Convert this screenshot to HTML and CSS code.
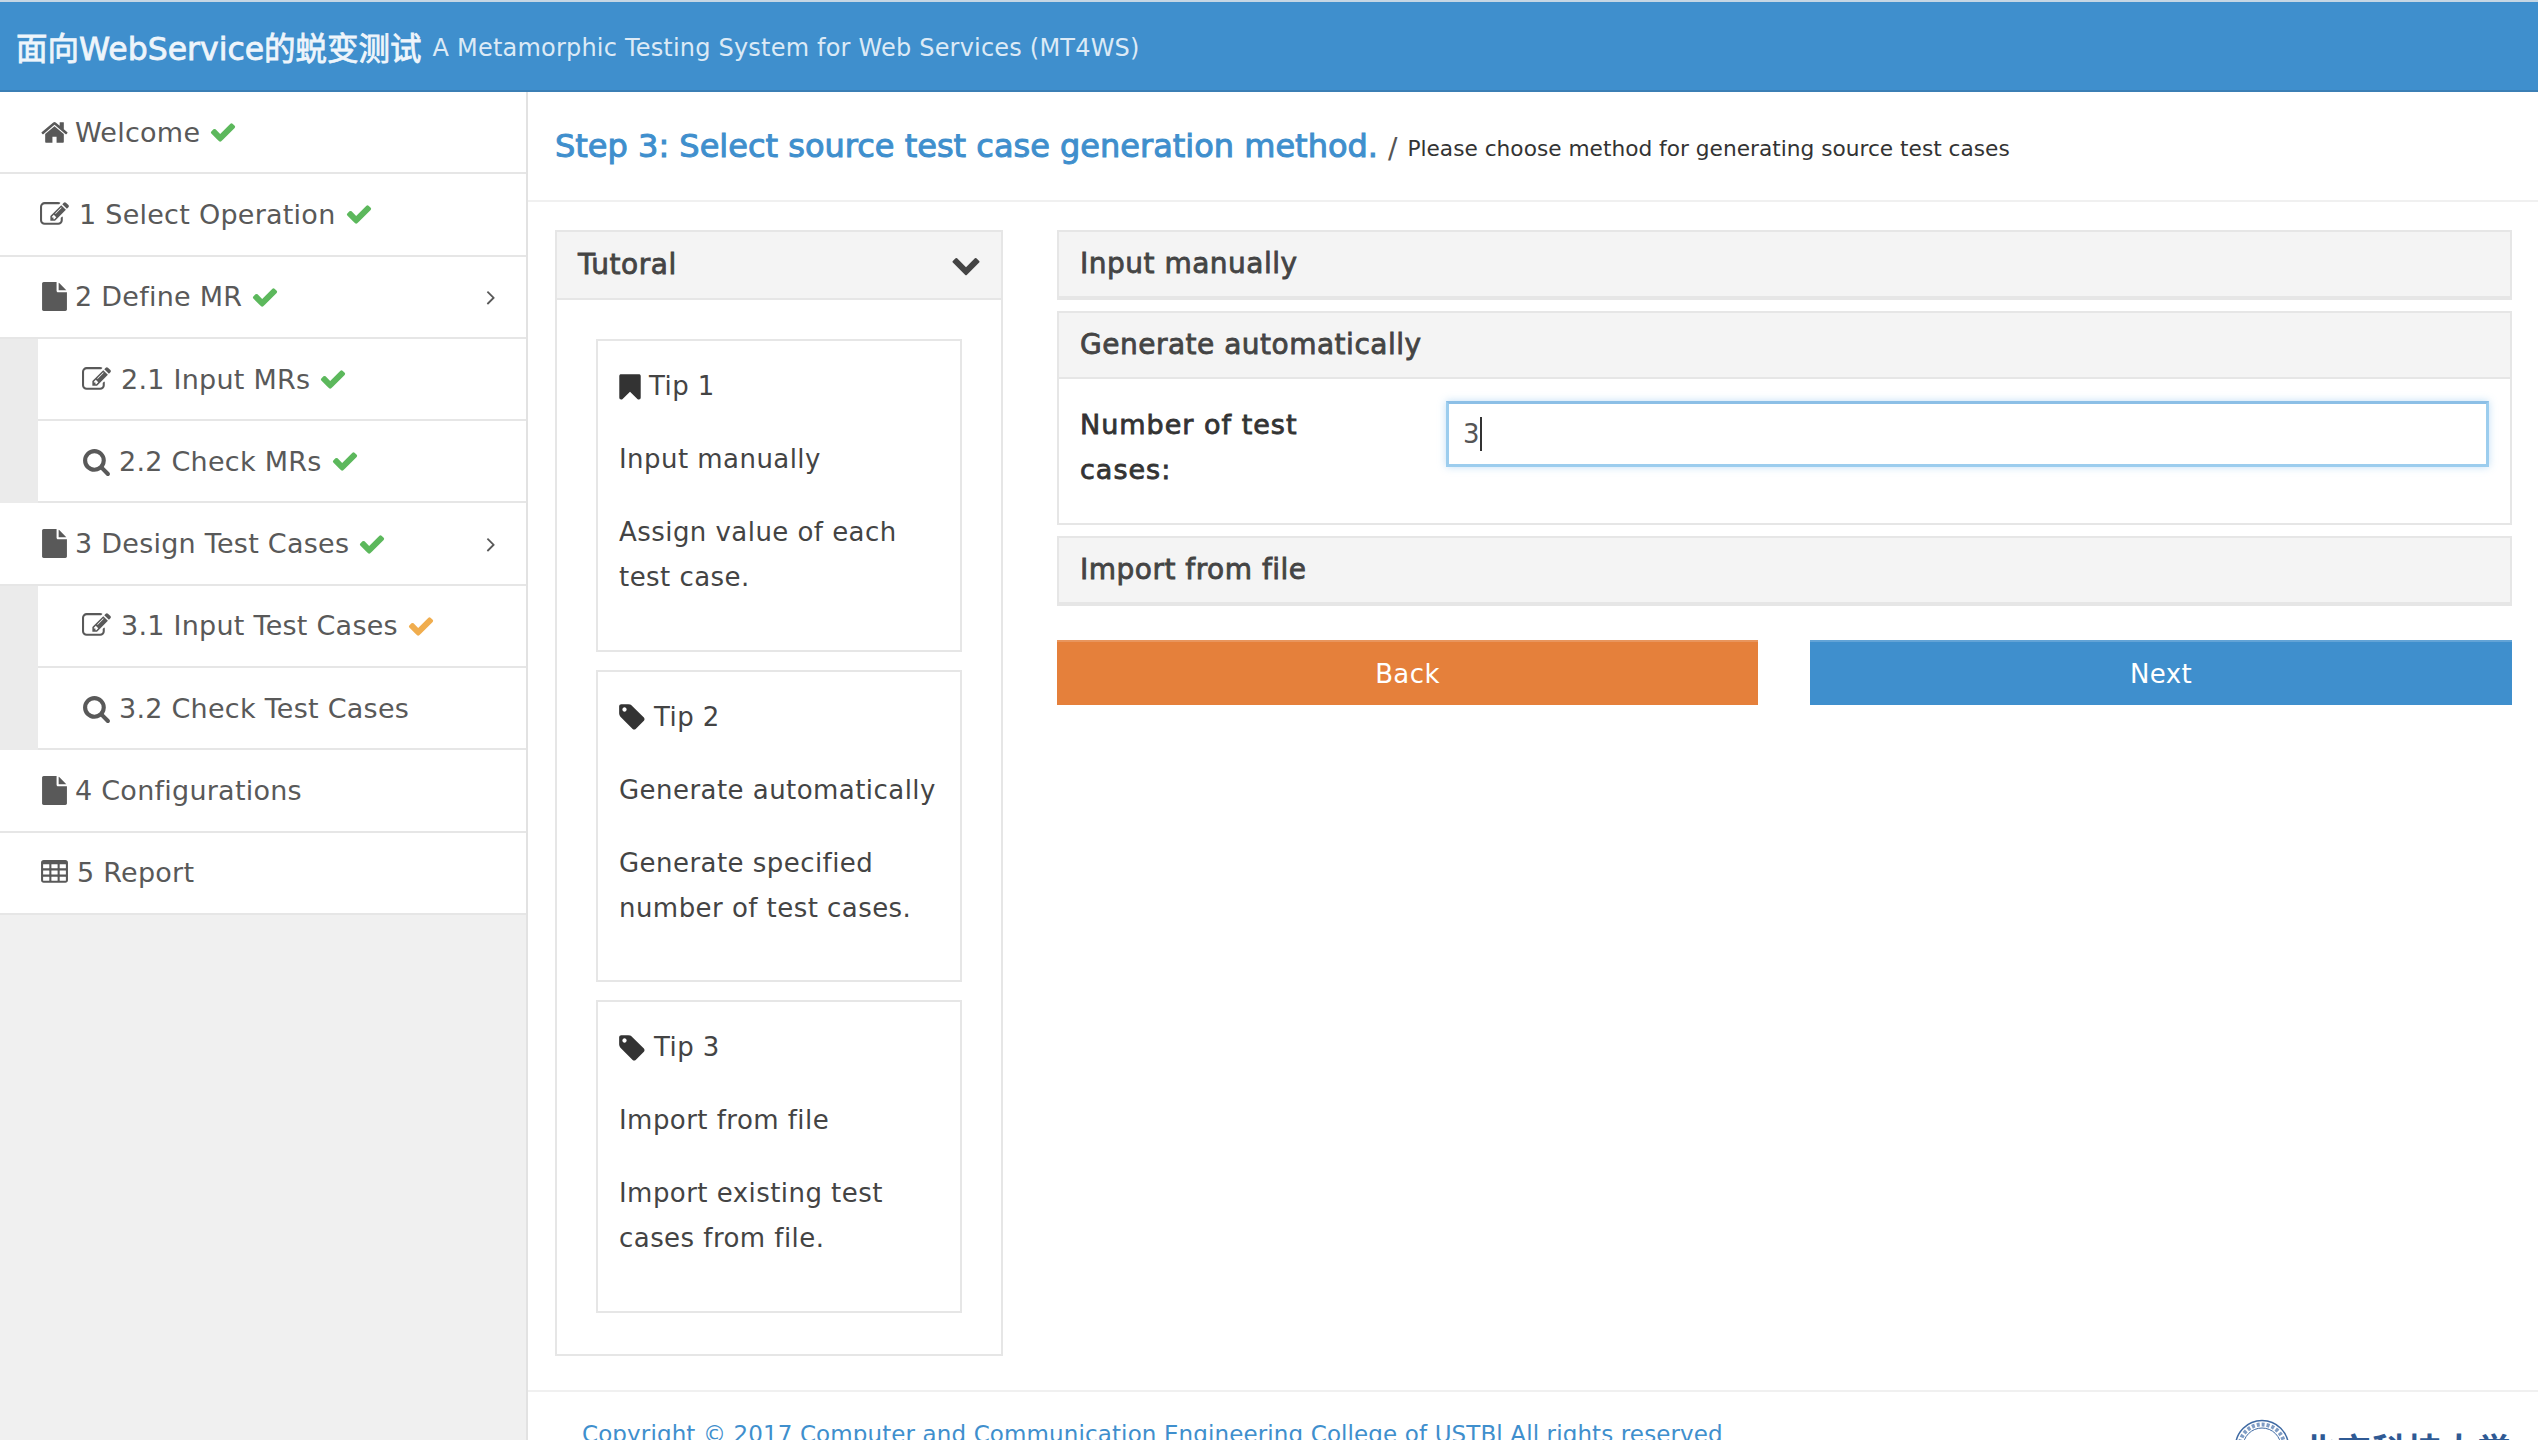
FILE: index.html
```html
<!DOCTYPE html>
<html lang="en">
<head>
    <meta charset="UTF-8">
    <title>MT4WS</title>
    <link rel="stylesheet" href="styles.css">
</head>
<body>
    <svg class="defs" aria-hidden="true">
        <symbol id="i-check" viewBox="0 0 1792 1792"><path d="M1671 566q0 40-28 68l-724 724-136 136q-28 28-68 28t-68-28l-136-136-362-362q-28-28-28-68t28-68l136-136q28-28 68-28t68 28l294 295 656-657q28-28 68-28t68 28l136 136q28 28 28 68z"/></symbol>
        <symbol id="i-home" viewBox="0 0 1792 1792"><path d="M1472 992v480q0 26-19 45t-45 19h-384v-384h-256v384h-384q-26 0-45-19t-19-45v-480q0-1 .5-3t.5-3l575-474 575 474q1 2 1 6zm223-69l-62 74q-8 9-21 11h-3q-13 0-21-7l-692-577-692 577q-12 8-24 7-13-2-21-11l-62-74q-8-10-7-23.5t11-21.5l719-599q32-26 76-26t76 26l244 204v-195q0-14 9-23t23-9h192q14 0 23 9t9 23v408l219 182q10 8 11 21.5t-7 23.5z"/></symbol>
        <symbol id="i-edit" viewBox="0 0 1792 1792"><path d="M888 1184l116-116-152-152-116 116v56h96v96h56zm440-720q-16-16-33 1l-350 350q-17 17-1 33t33-1l350-350q17-17 1-33zm80 594v190q0 119-84.5 203.5t-203.5 84.5h-832q-119 0-203.5-84.5t-84.5-203.5v-832q0-119 84.5-203.5t203.5-84.5h832q63 0 117 25 15 7 18 23 3 17-9 29l-49 49q-14 14-32 8-23-6-45-6h-832q-66 0-113 47t-47 113v832q0 66 47 113t113 47h832q66 0 113-47t47-113v-126q0-13 9-22l64-64q15-15 35-7t20 29zm-96-738l288 288-672 672h-288v-288zm444 132l-92 92-288-288 92-92q28-28 68-28t68 28l152 152q28 28 28 68t-28 68z"/></symbol>
        <symbol id="i-file" viewBox="0 0 1792 1792"><path d="M1152 512v-472q22 14 36 28l408 408q14 14 28 36h-472zm-128 32q0 40 28 68t68 28h544v1056q0 40-28 68t-68 28h-1344q-40 0-68-28t-28-68v-1600q0-40 28-68t68-28h800v544z"/></symbol>
        <symbol id="i-search" viewBox="0 0 1792 1792"><path d="M1216 832q0-185-131.5-316.5t-316.5-131.5-316.5 131.5-131.5 316.5 131.5 316.5 316.5 131.5 316.5-131.5 131.5-316.5zm512 832q0 52-38 90t-90 38q-54 0-90-38l-343-342q-179 124-399 124-143 0-273.5-55.5t-225-150-150-225-55.5-273.5 55.5-273.5 150-225 225-150 273.5-55.5 273.5 55.5 225 150 150 225 55.5 273.5q0 220-124 399l343 343q37 37 37 90z"/></symbol>
        <symbol id="i-table" viewBox="0 0 1792 1792"><path d="M576 1376v-192q0-14-9-23t-23-9h-320q-14 0-23 9t-9 23v192q0 14 9 23t23 9h320q14 0 23-9t9-23zm0-384v-192q0-14-9-23t-23-9h-320q-14 0-23 9t-9 23v192q0 14 9 23t23 9h320q14 0 23-9t9-23zm512 384v-192q0-14-9-23t-23-9h-320q-14 0-23 9t-9 23v192q0 14 9 23t23 9h320q14 0 23-9t9-23zm-512-768v-192q0-14-9-23t-23-9h-320q-14 0-23 9t-9 23v192q0 14 9 23t23 9h320q14 0 23-9t9-23zm512 384v-192q0-14-9-23t-23-9h-320q-14 0-23 9t-9 23v192q0 14 9 23t23 9h320q14 0 23-9t9-23zm512 384v-192q0-14-9-23t-23-9h-320q-14 0-23 9t-9 23v192q0 14 9 23t23 9h320q14 0 23-9t9-23zm-512-768v-192q0-14-9-23t-23-9h-320q-14 0-23 9t-9 23v192q0 14 9 23t23 9h320q14 0 23-9t9-23zm512 384v-192q0-14-9-23t-23-9h-320q-14 0-23 9t-9 23v192q0 14 9 23t23 9h320q14 0 23-9t9-23zm0-384v-192q0-14-9-23t-23-9h-320q-14 0-23 9t-9 23v192q0 14 9 23t23 9h320q14 0 23-9t9-23zm128-320v1088q0 66-47 113t-113 47h-1344q-66 0-113-47t-47-113v-1088q0-66 47-113t113-47h1344q66 0 113 47t47 113z"/></symbol>
        <symbol id="i-bookmark" viewBox="0 0 1792 1792"><path d="M1420 128q23 0 44 9 33 13 52.5 41t19.5 62v1289q0 34-19.5 62t-52.5 41q-19 8-44 8-48 0-83-32l-441-424-441 424q-36 33-83 33-23 0-44-9-33-13-52.5-41t-19.5-62v-1289q0-34 19.5-62t52.5-41q21-9 44-9h1048z"/></symbol>
        <symbol id="i-tag" viewBox="0 0 1792 1792"><path d="M576 448q0-53-37.5-90.5t-90.5-37.5-90.5 37.5-37.5 90.5 37.5 90.5 90.5 37.5 90.5-37.5 37.5-90.5zm1067 576q0 53-37 90l-491 492q-39 37-91 37-53 0-90-37l-715-716q-38-37-64.5-101t-26.5-117v-416q0-52 38-90t90-38h416q53 0 117 26.5t102 64.5l715 714q37 39 37 91z"/></symbol>
        <symbol id="i-down" viewBox="0 0 1792 1792"><path d="M1683 808l-742 741q-19 19-45 19t-45-19l-742-741q-19-19-19-45.5t19-45.5l166-165q19-19 45-19t45 19l531 531 531-531q19-19 45-19t45 19l166 165q19 19 19 45.5t-19 45.5z"/></symbol>
        <symbol id="i-right" viewBox="0 0 1792 1792"><path d="M1171 960q0 13-10 23l-466 466q-10 10-23 10t-23-10l-50-50q-10-10-10-23t10-23l393-393-393-393q-10-10-10-23t10-23l50-50q10-10 23-10t23 10l466 466q10 10 10 23z"/></symbol>
    </svg>

    <div class="topbar">
        <span class="brand">面向WebService的蜕变测试</span>
        <span class="brand-sub">A Metamorphic Testing System for Web Services (MT4WS)</span>
    </div>

    <div class="wrap">
        <ul class="sidebar">
            <li class="nav-item"><svg class="ico"><use href="#i-home"/></svg><span>Welcome</span><svg class="ok"><use href="#i-check"/></svg></li>
            <li class="nav-item"><svg class="ico"><use href="#i-edit"/></svg><span class="gap">1 Select Operation</span><svg class="ok"><use href="#i-check"/></svg></li>
            <li class="nav-item"><svg class="ico"><use href="#i-file"/></svg><span>2 Define MR</span><svg class="ok"><use href="#i-check"/></svg><svg class="arrow"><use href="#i-right"/></svg></li>
            <li class="nav-item sub"><svg class="ico"><use href="#i-edit"/></svg><span class="gap">2.1 Input MRs</span><svg class="ok"><use href="#i-check"/></svg></li>
            <li class="nav-item sub"><svg class="ico"><use href="#i-search"/></svg><span class="gap-s">2.2 Check MRs</span><svg class="ok"><use href="#i-check"/></svg></li>
            <li class="nav-item"><svg class="ico"><use href="#i-file"/></svg><span>3 Design Test Cases</span><svg class="ok"><use href="#i-check"/></svg><svg class="arrow"><use href="#i-right"/></svg></li>
            <li class="nav-item sub"><svg class="ico"><use href="#i-edit"/></svg><span class="gap">3.1 Input Test Cases</span><svg class="ok warn"><use href="#i-check"/></svg></li>
            <li class="nav-item sub"><svg class="ico"><use href="#i-search"/></svg><span class="gap-s">3.2 Check Test Cases</span></li>
            <li class="nav-item"><svg class="ico"><use href="#i-file"/></svg><span>4 Configurations</span></li>
            <li class="nav-item"><svg class="ico"><use href="#i-table"/></svg><span class="gap-s">5 Report</span></li>
        </ul>

        <div class="main">
            <div class="page-title">
                <h1>Step 3: Select source test case generation method.</h1>
                <span class="slash">/</span>
                <small>Please choose method for generating source test cases</small>
            </div>

            <div class="content">
                <div class="tutorial">
                    <div class="panel-head">Tutoral<svg class="chev"><use href="#i-down"/></svg></div>
                    <div class="tutorial-body">
                        <div class="tip">
                            <div class="tip-title"><svg class="tip-ico"><use href="#i-bookmark"/></svg>Tip 1</div>
                            <p>Input manually</p>
                            <p>Assign value of each test case.</p>
                        </div>
                        <div class="tip">
                            <div class="tip-title"><svg class="tip-ico tag"><use href="#i-tag"/></svg>Tip 2</div>
                            <p>Generate automatically</p>
                            <p>Generate specified number of test cases.</p>
                        </div>
                        <div class="tip">
                            <div class="tip-title"><svg class="tip-ico tag"><use href="#i-tag"/></svg>Tip 3</div>
                            <p>Import from file</p>
                            <p>Import existing test cases from file.</p>
                        </div>
                    </div>
                </div>

                <div class="methods">
                    <div class="panel"><div class="panel-head">Input manually</div></div>
                    <div class="panel">
                        <div class="panel-head">Generate automatically</div>
                        <div class="panel-body">
                            <label class="field-label">Number of test cases:</label>
                            <div class="fake-input">3<span class="caret"></span></div>
                        </div>
                    </div>
                    <div class="panel"><div class="panel-head">Import from file</div></div>
                    <div class="btn-row">
                        <button class="btn btn-back">Back</button>
                        <button class="btn btn-next">Next</button>
                    </div>
                </div>
            </div>

            <div class="footer">
                <span class="copy">Copyright © 2017 Computer and Communication Engineering College of USTBl All rights reserved</span>
                <div class="logo">
                    <svg class="seal" viewBox="0 0 56 56">
                        <circle cx="28" cy="28" r="26.5" fill="none" stroke="#3f6aa3" stroke-width="1.5"/>
                        <circle cx="28" cy="28" r="22.5" fill="none" stroke="#7f9cc4" stroke-width="4" stroke-dasharray="3 2"/>
                        <circle cx="28" cy="28" r="19" fill="none" stroke="#3f6aa3" stroke-width="1"/>
                    </svg>
                    <span class="logo-text">北京科技大学</span>
                </div>
            </div>
        </div>
    </div>
</body>
</html>
```

FILE: styles.css
```css
* {
    margin: 0;
    padding: 0;
    box-sizing: border-box;
    list-style: none;
}

html, body {
    height: 1440px;
    overflow: hidden;
}

body {
    font-family: "DejaVu Sans", "Noto Sans CJK SC", sans-serif;
    font-size: 24px;
    color: #333;
    background: #fff;
    display: flex;
    flex-direction: column;
}

.defs {
    display: none;
}

/* top bar */
.topbar {
    height: 92px;
    flex: none;
    background: #3f8fcd;
    border-top: 2px solid #c5d6e4;
    border-bottom: 2px solid #3b7fb5;
    color: #fff;
    display: flex;
    align-items: center;
    padding-left: 16px;
    white-space: nowrap;
}

.brand {
    font-size: 31.5px;
    -webkit-text-stroke: .8px #eef5fb;
    color: #eef5fb;
}

.brand-sub {
    font-size: 24px;
    letter-spacing: .2px;
    margin: 3px 0 0 11px;
    color: #dceaf6;
}

.wrap {
    flex: 1;
    display: flex;
    min-height: 0;
}

/* left nav */
.sidebar {
    width: 528px;
    flex: none;
    background: #f0f0f0;
    border-right: 2px solid #e2e2e2;
}

.nav-item {
    height: 82.3px;
    background: #fff;
    border-bottom: 2px solid #e6e6e6;
    padding-left: 40px;
    display: flex;
    align-items: center;
    color: #595959;
    font-size: 27px;
    letter-spacing: .25px;
    white-space: nowrap;
}

.nav-item.sub {
    margin-left: 38px;
    padding-left: 44px;
}

.sidebar .nav-item.sub {
    box-shadow: -38px 0 0 #ebebeb;
}

.ico {
    width: 29px;
    height: 29px;
    fill: #595959;
    margin-right: 6px;
    flex: none;
}

.gap {
    margin-left: 4px;
}

.gap-s {
    margin-left: 2px;
}

.ok {
    width: 28px;
    height: 28px;
    fill: #5cb85c;
    margin-left: 9px;
    flex: none;
}

.warn {
    fill: #f0ad4e;
}

.arrow {
    width: 24px;
    height: 24px;
    fill: #595959;
    margin-left: auto;
    margin-right: 23px;
}

/* main area */
.main {
    flex: 1;
    min-width: 0;
    display: flex;
    flex-direction: column;
}

.page-title {
    height: 110px;
    flex: none;
    border-bottom: 2px solid #f0f0f0;
    padding-left: 27px;
    display: flex;
    align-items: center;
    white-space: nowrap;
}

.page-title h1 {
    font-size: 32px;
    font-weight: normal;
    -webkit-text-stroke: 1px #3f8fcd;
    color: #3f8fcd;
}

.slash {
    margin: 4px 10px 0 10px;
    font-size: 28px;
    color: #555;
}

.page-title small {
    font-size: 21.7px;
    margin-top: 4px;
    color: #333;
}

.content {
    height: 1188px;
    flex: none;
    padding: 28px 26px 0 27px;
    display: flex;
    gap: 54px;
    align-items: flex-start;
}

.tutorial {
    width: 448px;
    flex: none;
    border: 2px solid #e6e6e6;
}

.panel-head {
    height: 68px;
    background: #f4f4f4;
    border-bottom: 2px solid #e6e6e6;
    padding: 0 0 2px 21px;
    display: flex;
    align-items: center;
    justify-content: space-between;
    font-size: 28px;
    letter-spacing: .5px;
    -webkit-text-stroke: .8px #444;
    color: #444;
}

.chev {
    width: 30px;
    height: 30px;
    fill: #444;
    stroke: none;
    margin-right: 20px;
}

.tutorial-body {
    padding: 39px 39px 41px;
    display: flex;
    flex-direction: column;
    gap: 18px;
}

.tip {
    height: 312.5px;
    border: 2px solid #e6e6e6;
    padding: 23px 21px 0;
    font-size: 26px;
    letter-spacing: .45px;
    line-height: 45px;
    color: #444;
}

.tip p {
    margin-top: 28px;
}

.tip-title {
    display: flex;
    align-items: center;
}

.tip-ico {
    width: 30px;
    height: 30px;
    fill: #333;
    margin: 0 4px 0 -4px;
}

.tip-ico.tag {
    margin: 0 7px 0 -2px;
}

.methods {
    flex: 1;
    min-width: 0;
}

.panel {
    border: 2px solid #e6e6e6;
    margin-bottom: 11px;
}

.panel .panel-head {
    height: 66px;
}

.panel-body {
    height: 144px;
    padding: 23px 0 0 21px;
    display: flex;
}

.field-label {
    width: 366px;
    flex: none;
    font-size: 27px;
    letter-spacing: 1px;
    -webkit-text-stroke: .8px #333;
    line-height: 45px;
    padding-right: 90px;
    color: #333;
}

.fake-input {
    width: 1043px;
    height: 66px;
    margin-top: -1px;
    border: 3px solid #9ccdee;
    border-top-color: #8cbfe6;
    box-shadow: 0 0 8px rgba(102, 175, 233, .4);
    padding-left: 14px;
    display: flex;
    align-items: center;
    font-size: 26px;
    color: #555;
}

.caret {
    width: 2px;
    height: 34px;
    background: #333;
}

.btn-row {
    display: flex;
    justify-content: space-between;
    margin-top: 34px;
}

.btn {
    width: 701px;
    height: 65px;
    border: none;
    color: #fff;
    font-family: inherit;
    font-size: 26px;
    letter-spacing: .4px;
}

.btn-back {
    background: #e5803b;
    border-top: 2px solid #e8955d;
}

.btn-next {
    width: 702px;
    background: #3f8fcd;
    border-top: 2px solid #62a3d6;
}

/* footer is cut off by the window */
.footer {
    flex: none;
    height: 80px;
    padding: 27px 26px 0 54px;
    display: flex;
    justify-content: space-between;
    position: relative;
}

.footer::before {
    content: "";
    position: absolute;
    left: 0;
    right: 0;
    top: 0;
    height: 2px;
    background: #f0f0f0;
}

.copy {
    font-size: 23px;
    letter-spacing: .12px;
    color: #3f8fcd;
    white-space: nowrap;
    line-height: 34px;
}

.logo {
    display: flex;
    align-items: flex-start;
    margin-top: -2px;
}

.seal {
    width: 56px;
    height: 56px;
    margin: 4px 2px 0 0;
}

.logo-text {
    font-size: 34px;
    font-weight: bold;
    color: #2f5a94;
    margin-left: 10px;
    margin-top: 16px;
    letter-spacing: 1px;
    line-height: 40px;
}
```
